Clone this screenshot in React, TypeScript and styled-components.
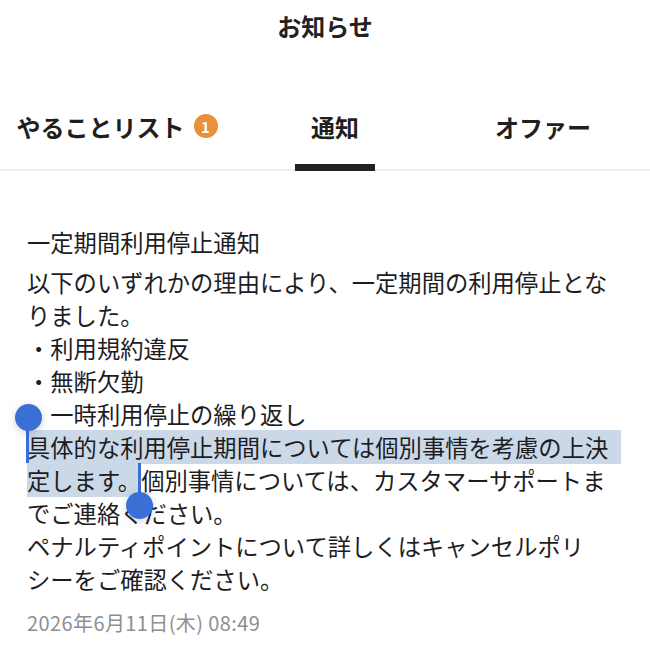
import React from "react";
import styled, {createGlobalStyle} from "styled-components";

const GlobalStyle = createGlobalStyle`
  html, body {
    margin: 0;
    padding: 0;
    background: #fff;
  }

  body {
    font-family: "Noto Sans CJK JP", "Noto Sans", sans-serif;
    color: #1d1d1f;
  }
`;

const tabs = [
    {label: "やることリスト", badge: 1},
    {label: "通知", active: true},
    {label: "オファー"},
];

const Handle: React.FC<{end?: boolean}> = ({end}) => (
    <>
        <Stem $end={end}/>
        <Knob $end={end}/>
    </>
);

export default function App() {
    return (
        <Page lang="ja">
            <GlobalStyle/>
            <Header>お知らせ</Header>

            <TabBar>
                {tabs.map((t) => (
                    <Tab key={t.label}>
                        <TabLabel>
                            {t.label}
                            {t.badge && <Badge>{t.badge}</Badge>}
                        </TabLabel>
                        <Indicator $active={!!t.active}/>
                    </Tab>
                ))}
            </TabBar>

            <Content>
                <NoticeTitle>一定期間利用停止通知</NoticeTitle>
                <Body>
                    <Para>以下のいずれかの理由により、一定期間の利用停止となりました。</Para>
                    <Para>・利用規約違反</Para>
                    <Para>・無断欠勤</Para>
                    <Para>・一時利用停止の繰り返し</Para>
                    <Para>
                        <Selected>
                            <Anchor>具<Handle/></Anchor>
                            体的な利用停止期間については個別事情を考慮の上<LineEnd>決</LineEnd>定します
                            <Anchor>。<Handle end/></Anchor>
                        </Selected>
                        個別事情については、カスタマーサポートまでご連絡ください。
                    </Para>
                    <Para>ペナルティポイントについて詳しくはキャンセルポリシーをご確認ください。</Para>
                </Body>
                <DateText>2026年6月11日(木) 08:49</DateText>
            </Content>
        </Page>
    );
}

const Page = styled.div`
  width: 650px;
  min-height: 663px;
  background: #fff;
`;

const Header = styled.div`
  height: 50px;
  display: flex;
  align-items: center;
  justify-content: center;
  font-size: 24px;
  font-weight: 700;
  color: #222;
`;

const TabBar = styled.div`
  display: grid;
  grid-template-columns: 234px 202px 1fr;
  border-bottom: 2px solid #efefef;
`;

const Tab = styled.div`
  display: flex;
  flex-direction: column;
  align-items: center;
  padding-top: 58px;
`;

const TabLabel = styled.div`
  display: flex;
  align-items: center;
  gap: 9px;
  height: 36px;
  font-size: 24px;
  font-weight: 700;
  color: #1f1f1f;
`;

const Badge = styled.span`
  flex: 0 0 auto;
  width: 24px;
  height: 24px;
  border-radius: 50%;
  background: #e8913a;
  color: #fff;
  font-size: 15px;
  font-weight: 700;
  display: flex;
  align-items: center;
  justify-content: center;
  line-height: 1;
`;

const Indicator = styled.div<{$active: boolean}>`
  width: 80px;
  height: 7px;
  margin-top: 20px;
  margin-bottom: -2px;
  background: ${(p) => (p.$active ? "#222" : "transparent")};
`;

const Content = styled.div`
  padding: 55px 27px 0;
  font-size: 23.3px;
  line-height: 33px;
  line-break: strict;
`;

const NoticeTitle = styled.div`
  margin-bottom: 7px;
  color: #1d1d1f;
`;

const Body = styled.div`
  color: #1d1d1f;
`;

const Para = styled.p`
  margin: 0;
`;

const Selected = styled.span`
  background: #cad8e8;
`;

// the selection band runs on to the right edge of the text box
const LineEnd = styled.span`
  background: #cad8e8;
  padding-right: 13px;
  margin-right: -13px;
`;

const Anchor = styled.span`
  position: relative;
`;

const Stem = styled.span<{$end?: boolean}>`
  position: absolute;
  width: 3px;
  background: #3a6fd6;
  ${(p) => (p.$end ? "right: 0; top: 0; height: 32px;" : "left: -1px; top: -12px; height: 45px;")}
`;

const Knob = styled.span<{$end?: boolean}>`
  position: absolute;
  width: 27px;
  height: 27px;
  border-radius: 50%;
  background: #3a6fd6;
  box-shadow: 0 2px 8px rgba(0, 0, 0, 0.18);
  ${(p) => (p.$end ? "right: -12px; top: 29px;" : "left: -12px; top: -26px;")}
`;

const DateText = styled.div`
  margin-top: 14px;
  font-size: 20px;
  line-height: 26px;
  letter-spacing: 0.4px;
  color: #8e8e93;
`;
